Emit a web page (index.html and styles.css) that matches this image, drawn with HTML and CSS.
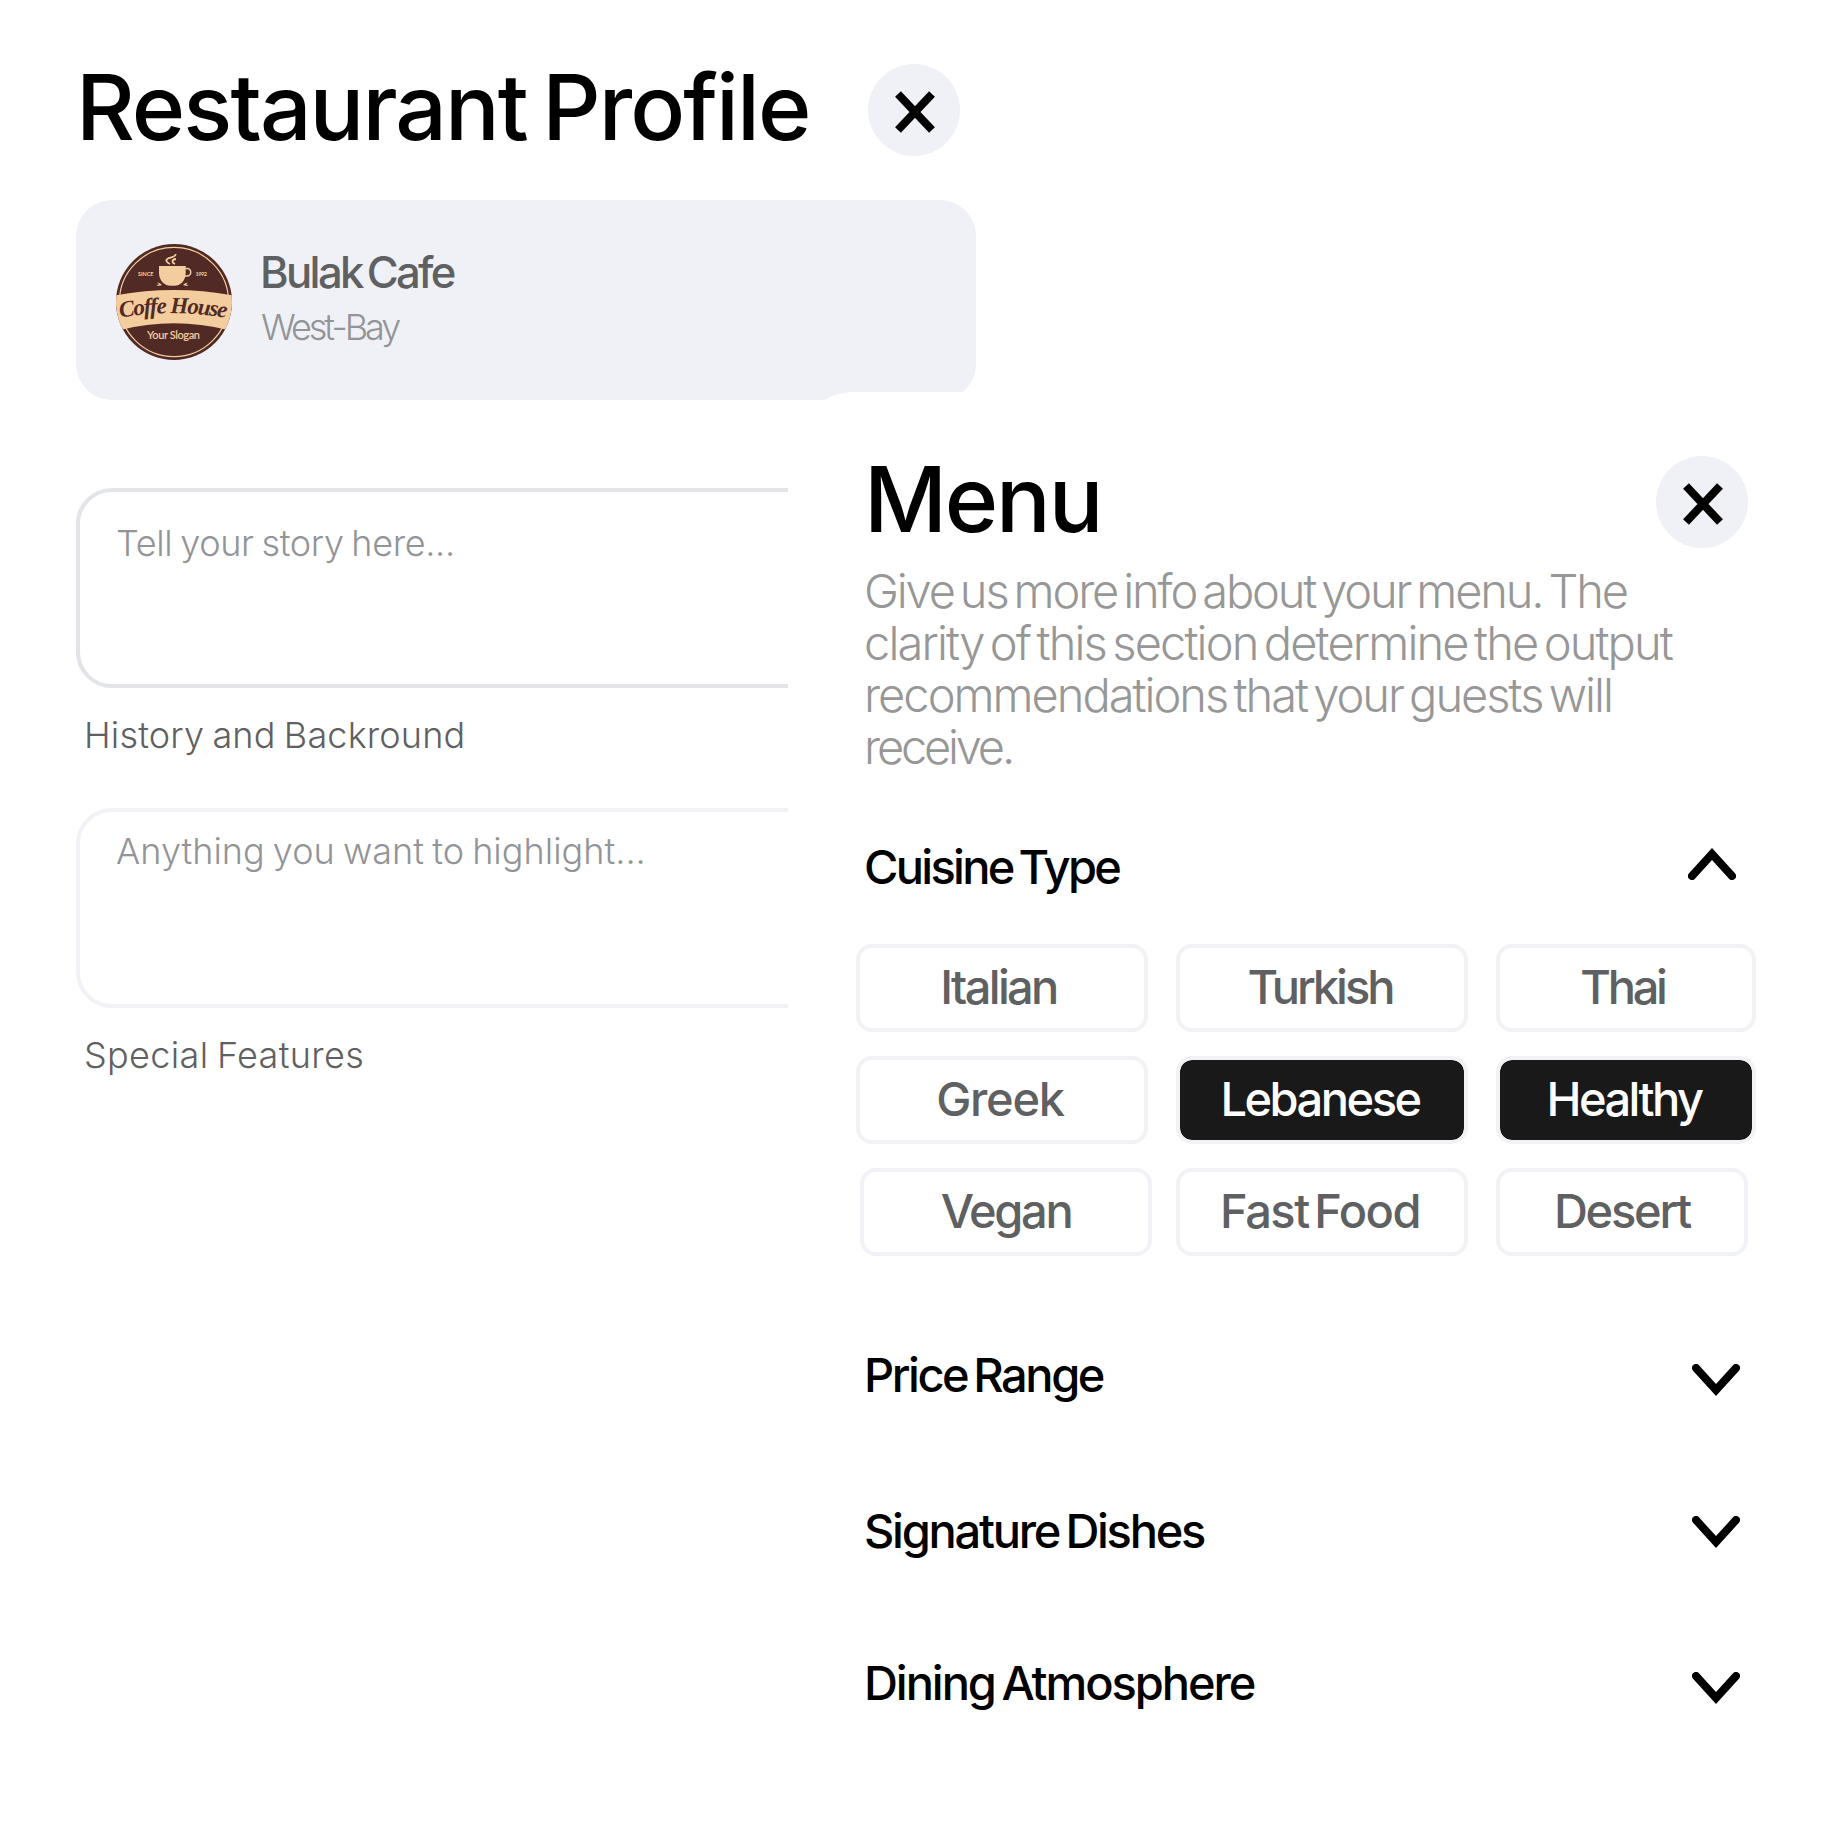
FILE: index.html
```
<!DOCTYPE html>
<html lang="en">
<head>
<meta charset="utf-8">
<title>Restaurant Profile</title>
<link rel="stylesheet" href="styles.css">
</head>
<body>
<main class="screen">
  <section class="profile">
    <header class="head">
      <h1 class="title title-profile">Restaurant Profile</h1>
      <button class="close" aria-label="Close">
        <svg width="42" height="44" viewBox="0 0 42 44"><path d="M4 4L38 40M38 4L4 40"/></svg>
      </button>
    </header>
    <div class="card">
      <svg class="logo" viewBox="0 0 116 116">
        <defs>
          <clipPath id="disc"><circle cx="58" cy="58" r="58"/></clipPath>
          <path id="arc" d="M4 73.500Q58 64.500 114 74.500"/>
        </defs>
        <g clip-path="url(#disc)">
          <rect width="116" height="116" fill="#522a25"/>
          <circle cx="58" cy="58" r="54.600" fill="none" stroke="#f3cd9d" stroke-width="1.200"/>
          <path d="M-2 51.500Q58 40.500 118 51.500L112 86Q58 72.500 4 86Z" fill="#f3cd9d"/>
        </g>
        <g fill="#f3cd9d">
          <path d="M43 22H69.700V29C69.700 37 64 41.800 58.500 41.800H54.500C49 41.800 43 37 43 29Z"/>
          <path d="M41 38.500Q44 38.500 46 41Q43 42.500 40.500 41.300L43 40.300ZM72 38.500Q69 38.500 67 41Q70 42.500 72.500 41.300L70 40.300Z"/>
        </g>
        <path d="M59.500 10C60 13 55 13.500 52 14.500C49 16 50.500 18.500 54 20M60 15C55.500 15.500 55.500 18.500 59 20" fill="none" stroke="#f3cd9d" stroke-width="1.800"/>
        <path d="M69 24.500H71A3.700 3.700 0 0 1 71 32H68.500" fill="none" stroke="#f3cd9d" stroke-width="1.500"/>
        <text class="logo-tiny" x="22" y="32" textLength="15.500">SINCE</text>
        <text class="logo-tiny" x="79.500" y="32" textLength="11.500">1992</text>
        <text class="logo-name"><textPath href="#arc" textLength="107">Coffe House</textPath></text>
        <text class="logo-slogan" x="31" y="94.500" textLength="53">Your Slogan</text>
      </svg>
      <div class="card-text">
        <div class="name">Bulak Cafe</div>
        <div class="place">West-Bay</div>
      </div>
    </div>
    <div class="field field-active"><span class="hint-story">Tell your story here...</span></div>
    <div class="label label-history">History and Backround</div>
    <div class="field field-idle"><span class="hint-highlight">Anything you want to highlight...</span></div>
    <div class="label label-features">Special Features</div>
  </section>

  <section class="menu">
    <header class="head menu-head">
      <h2 class="title title-menu">Menu</h2>
      <button class="close" aria-label="Close">
        <svg width="42" height="44" viewBox="0 0 42 44"><path d="M4 4L38 40M38 4L4 40"/></svg>
      </button>
    </header>
    <p class="intro">
      <span class="line line-1">Give us more info about your menu. The</span>
      <span class="line line-2">clarity of this section determine the output</span>
      <span class="line line-3">recommendations that your guests will</span>
      <span class="line line-4">receive.</span>
    </p>

    <div class="row row-cuisine">
      <h3>Cuisine Type</h3>
      <svg class="chevron" width="48" height="32" viewBox="0 0 48 32"><path d="M4 28L24 6L44 28"/></svg>
    </div>
    <div class="chips">
      <div class="chip italian">Italian</div>
      <div class="chip turkish">Turkish</div>
      <div class="chip thai">Thai</div>
      <div class="chip greek">Greek</div>
      <div class="chip lebanese selected">Lebanese</div>
      <div class="chip healthy selected">Healthy</div>
      <div class="chip vegan">Vegan</div>
      <div class="chip fast-food">Fast Food</div>
      <div class="chip desert">Desert</div>
    </div>

    <div class="row row-price">
      <h3>Price Range</h3>
      <svg class="chevron" width="48" height="32" viewBox="0 0 48 32"><path d="M4 4L24 26L44 4"/></svg>
    </div>
    <div class="row row-dishes">
      <h3>Signature Dishes</h3>
      <svg class="chevron" width="48" height="32" viewBox="0 0 48 32"><path d="M4 4L24 26L44 4"/></svg>
    </div>
    <div class="row row-dining">
      <h3>Dining Atmosphere</h3>
      <svg class="chevron" width="48" height="32" viewBox="0 0 48 32"><path d="M4 4L24 26L44 4"/></svg>
    </div>
  </section>
</main>
</body>
</html>
```
FILE: styles.css
```
* { box-sizing: border-box; margin: 0; padding: 0; }

body {
  background: #fff;
  color: #000;
  font-family: Inter, "Liberation Sans", sans-serif;
}

.screen {
  position: relative;
  width: 1824px;
  height: 1824px;
  overflow: hidden;
}

/* Profile */
.profile { width: 976px; padding: 64px 0 0 76px; white-space: nowrap; }

.head {
  display: flex;
  justify-content: space-between;
  height: 92px;
  padding-right: 16px;
}
.title { font-size: 91px; font-weight: 540; line-height: 86px; }
.title-profile { letter-spacing: -1.93px; word-spacing: -7px; }
.title-menu { letter-spacing: -2.2px; }

.close {
  display: flex;
  justify-content: center;
  flex: none;
  width: 92px;
  height: 92px;
  padding: 26px 0 0 2px;
  border: 0;
  border-radius: 50%;
  background: #f0f1f6;
}
.close path { fill: none; stroke: #000; stroke-width: 8; }

.card {
  display: flex;
  gap: 28px;
  height: 200px;
  margin-top: 44px;
  padding: 44px 40px;
  border-radius: 36px;
  background: #f0f1f6;
}
.logo { flex: none; width: 116px; height: 116px; }
.logo-tiny { fill: #f3cd9d; font: 700 5.500px Lato, sans-serif; }
.logo-name { fill: #522a25; font: italic 700 23px "Liberation Serif", serif; }
.logo-slogan { fill: #f3cd9d; font: 600 11px Lato, sans-serif; }
.card-text { display: flex; flex-direction: column; gap: 2px; padding-top: 3px; line-height: 52px; }
.name { color: #5f6062; font-size: 43.6px; font-weight: 540; letter-spacing: -2.65px; word-spacing: -4px; }
.place { color: #929497; font-size: 36px; font-weight: 350; letter-spacing: -3.01px; padding-left: 1px; }

.field {
  height: 200px;
  padding-left: 36px;
  border: 4px solid;
  border-radius: 36px;
  font-size: 36px;
  line-height: 44px;
  word-spacing: -2px;
}
.field span { color: #929497; font-weight: 350; }
.field-active { margin-top: 88px; padding-top: 29px; border-color: #e2e4ea; }
.field-idle { margin-top: 51px; padding-top: 17px; border-color: #f1f2f6; }
.hint-story { letter-spacing: -.34px; }
.hint-highlight { letter-spacing: .02px; }

.label {
  margin-top: 25px;
  padding-left: 8px;
  color: #5f6062;
  font-size: 36px;
  font-weight: 350;
  line-height: 44px;
  word-spacing: -2px;
}
.label-history { letter-spacing: .17px; }
.label-features { letter-spacing: .35px; }

/* Menu sheet, stacked over the profile */
.menu {
  position: absolute;
  top: 392px;
  left: 788px;
  width: 1036px;
  height: 1432px;
  padding: 64px 68px 0;
  border-radius: 68px 0 0 0;
  background: #fff;
  white-space: nowrap;
}
.menu-head { padding: 0 8px; }

.intro {
  margin-top: 17px;
  padding-left: 8px;
  color: #979797;
  font-size: 47px;
  font-weight: 350;
  line-height: 52px;
  word-spacing: -5px;
}
.line { display: block; }
.line-1 { letter-spacing: -2.15px; }
.line-2 { letter-spacing: -1.87px; }
.line-3 { letter-spacing: -2px; }
.line-4 { letter-spacing: -3.2px; }

.row {
  display: flex;
  justify-content: space-between;
  height: 56px;
  padding: 0 16px 0 8px;
}
.row h3 { font-size: 47px; font-weight: 540; line-height: 56px; word-spacing: -4px; }
.chevron { flex: none; margin-top: 17px; }
.chevron path { fill: none; stroke: #000; stroke-width: 8; stroke-linecap: round; }

.row-cuisine { margin-top: 66px; padding-right: 20px; }
.row-cuisine h3 { letter-spacing: -2.7px; }
.row-cuisine .chevron { margin-top: 9px; }
.row-price { margin-top: 91px; }
.row-price h3 { letter-spacing: -2.45px; }
.row-dishes { margin-top: 100px; }
.row-dishes h3 { letter-spacing: -2.26px; }
.row-dishes .chevron { margin-top: 13px; }
.row-dining { margin-top: 96px; }
.row-dining h3 { letter-spacing: -2.06px; }

.chips {
  display: grid;
  grid-template-columns: 292px 292px 260px;
  gap: 24px 28px;
  margin-top: 49px;
}
.chip {
  height: 88px;
  padding-right: 4px;
  border: 4px solid #f1f2f6;
  border-radius: 16px;
  color: #5f6062;
  font-size: 47px;
  font-weight: 540;
  line-height: 78px;
  text-align: center;
}
.selected { background: #191919 padding-box; color: #fff; }
.italian { letter-spacing: -2.65px; padding-right: 7px; }
.turkish { letter-spacing: -3.05px; }
.thai { letter-spacing: -3.3px; padding-right: 7px; }
.greek { letter-spacing: -1.3px; }
.lebanese { letter-spacing: -2.5px; }
.healthy { letter-spacing: -2.55px; padding-right: 4px; }
.vegan { letter-spacing: -2.35px; width: 292px; margin-left: 4px; padding-right: 0; }
.fast-food { letter-spacing: -1.5px; word-spacing: -5.500px; }
.desert { letter-spacing: -2.2px; width: 252px; padding-right: 0; }
```
